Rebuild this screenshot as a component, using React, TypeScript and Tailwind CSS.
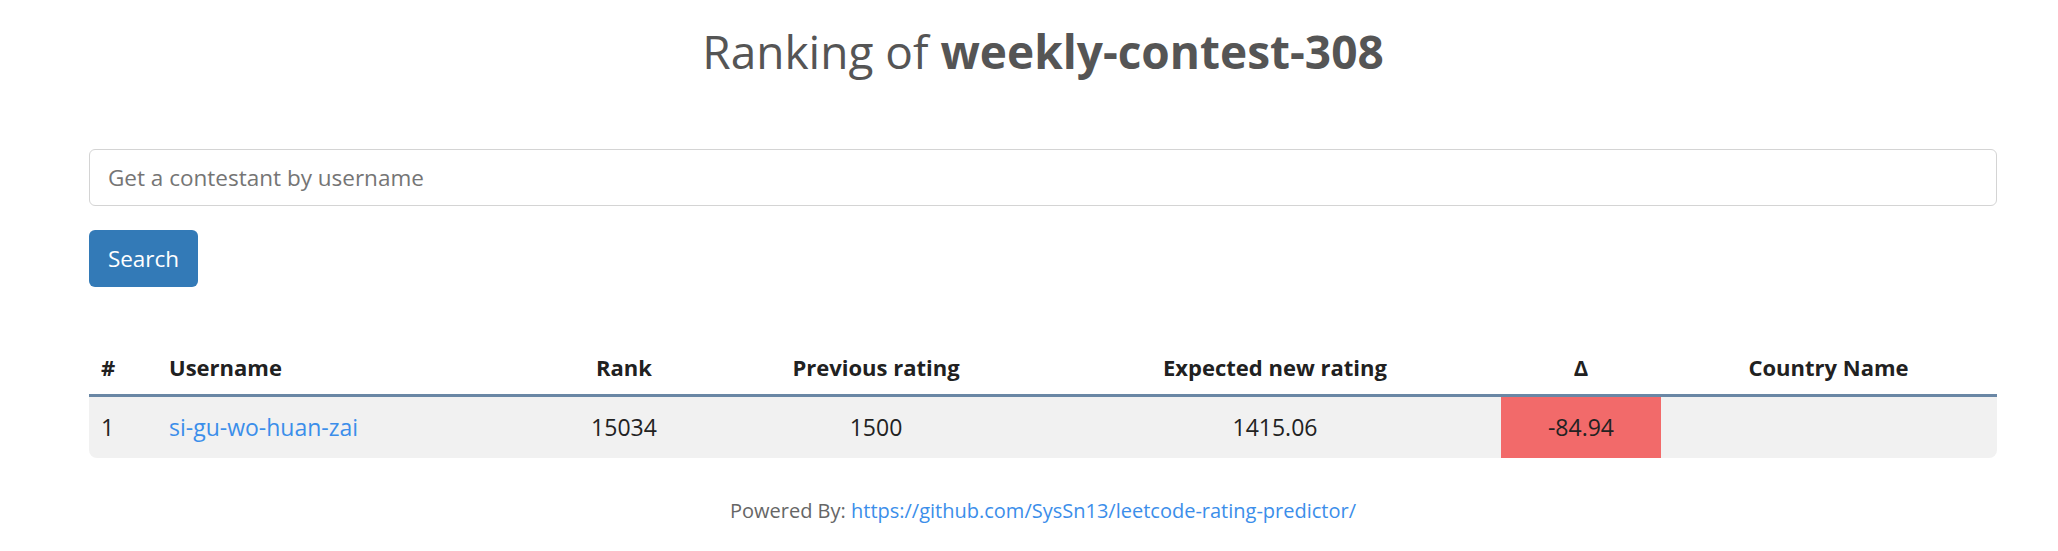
import React from "react";

const cols = "grid grid-cols-[68px_388px_158px_346px_452px_160px_335px]";

export default function App() {
  return (
    <div className="min-h-[551px] w-full bg-white font-['Open_Sans','Noto_Sans',sans-serif] text-[#333]">
      <div className="ml-[89px] w-[1908px] flex flex-col">
        <h1 className="mt-[24px] h-[54px] text-center text-[46px] leading-[54px] font-normal text-[#555]">
          Ranking of <span className="font-bold">weekly-contest-308</span>
        </h1>
        <div className="mt-[71px] flex h-[57px] items-center rounded-[6px] border border-[#d4d4d4] pl-[18px] text-[22.5px] text-[#757575]">
          Get a contestant by username
        </div>
        <div className="mt-[24px] flex h-[57px] w-[109px] items-center justify-center rounded-[6px] bg-[#337ab7] text-[22.5px] text-white">
          Search
        </div>
        <div className="mt-[54px] flex flex-col">
          <div className={`${cols} h-[56px] items-center border-b-[3px] border-[#6a87a5] text-[22px] font-bold text-[#212121]`}>
            <div className="pl-[12px]">#</div>
            <div className="pl-[12px]">Username</div>
            <div className="text-center">Rank</div>
            <div className="text-center">Previous rating</div>
            <div className="text-center">Expected new rating</div>
            <div className="text-center">Δ</div>
            <div className="text-center">Country Name</div>
          </div>
          <div className={`${cols} h-[61px] items-stretch overflow-hidden rounded-b-[8px] bg-[#f1f1f1] text-[23px] text-[#222]`}>
            <div className="flex items-center pl-[12px]">1</div>
            <div className="flex items-center pl-[12px] text-[#3b8eea]">si-gu-wo-huan-zai</div>
            <div className="flex items-center justify-center">15034</div>
            <div className="flex items-center justify-center">1500</div>
            <div className="flex items-center justify-center">1415.06</div>
            <div className="flex items-center justify-center bg-[#f26a6a]">-84.94</div>
            <div></div>
          </div>
        </div>
        <div className="mt-[38px] text-center text-[20px] text-[#666]">
          Powered By: <span className="text-[#3b8eea]">https://github.com/SysSn13/leetcode-rating-predictor/</span>
        </div>
      </div>
    </div>
  );
}
